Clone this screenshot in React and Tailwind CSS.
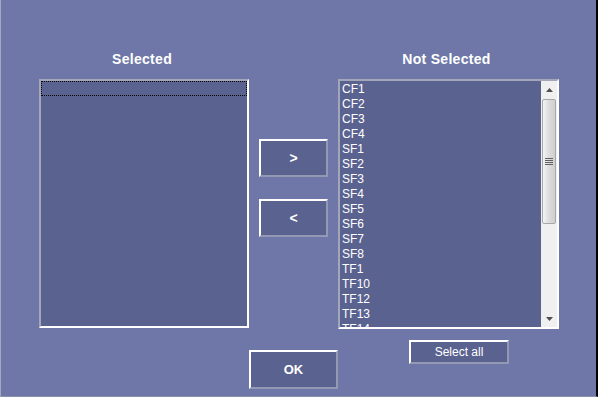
import React from "react";

const items = ["CF1","CF2","CF3","CF4","SF1","SF2","SF3","SF4","SF5","SF6","SF7","SF8","TF1","TF10","TF12","TF13","TF14"];

function RaisedButton({ className, children }) {
  return (
    <div className={"flex items-center justify-center bg-[#5a6290] border-t-2 border-l-2 border-t-white border-l-white border-b-2 border-r-2 border-b-[#9499b3] border-r-[#9499b3] text-white " + className}>
      {children}
    </div>
  );
}

export default function App() {
  return (
    <div
      className="w-[598px] h-[397px] bg-[#6e77a7] border-l border-l-[#a4a8c0] border-r-2 border-r-black border-b border-b-[#8a8fae] flex flex-col pl-[38px] pt-[51px] overflow-hidden"
      style={{ fontFamily: '"Liberation Sans", Arial, sans-serif' }}
    >
      <div className="flex">
        {/* Left column */}
        <div className="w-[210px] flex flex-col">
          <div className="h-[16px] leading-[16px] text-center text-white font-bold text-[14px] tracking-[0.3px] pr-[4px]">Selected</div>
          <div className="mt-[12px] h-[249px] bg-[#5a6290] border-t-2 border-l-2 border-t-[#a3a6b8] border-l-[#a3a6b8] border-b-2 border-r-2 border-b-white border-r-white">
            <div className="h-[15px] border border-dotted border-black"></div>
          </div>
        </div>
        {/* Middle column */}
        <div className="ml-[10px] w-[69px] flex flex-col pt-[88px] gap-[22px]">
          <RaisedButton className="h-[38px] font-bold text-[14px]">&gt;</RaisedButton>
          <RaisedButton className="h-[38px] font-bold text-[14px]">&lt;</RaisedButton>
        </div>
        {/* Right column */}
        <div className="ml-[10px] w-[221px] flex flex-col">
          <div className="h-[16px] leading-[16px] text-center text-white font-bold text-[14px] tracking-[0.3px] pr-[4px]">Not Selected</div>
          <div className="mt-[12px] h-[250px] bg-[#5a6290] border-t-2 border-l-2 border-t-[#a3a6b8] border-l-[#a3a6b8] border-b-2 border-r-2 border-b-white border-r-white flex overflow-hidden">
            <div className="flex-1 overflow-hidden pl-[2px] pt-[1px]">
              {items.map((it) => (
                <div key={it} className="h-[15px] leading-[15px] text-white text-[12px]">{it}</div>
              ))}
            </div>
            <div className="w-[16px] bg-[#f0f0f0] flex flex-col items-center">
              <div className="h-[17px] w-full flex items-center justify-center">
                <svg width="7" height="4" viewBox="0 0 7 4"><path d="M0 4 L3.5 0 L7 4 Z" fill="#505050" /></svg>
              </div>
              <div className="w-[14px] h-[125px] mt-[1px] rounded-[2px] border border-[#a8a8a8] bg-gradient-to-r from-[#f4f4f4] via-[#dcdcdc] to-[#cfcfcf] flex items-center justify-center">
                <svg width="8" height="8" viewBox="0 0 8 8">
                  <path d="M0 0.5 H8 M0 2.5 H8 M0 4.5 H8 M0 6.5 H8" stroke="#606060" strokeWidth="1" />
                </svg>
              </div>
              <div className="flex-1"></div>
              <div className="h-[17px] w-full flex items-center justify-center">
                <svg width="7" height="4" viewBox="0 0 7 4"><path d="M0 0 L3.5 4 L7 0 Z" fill="#505050" /></svg>
              </div>
            </div>
          </div>
        </div>
      </div>
      {/* Bottom row */}
      <div className="flex">
        <div className="ml-[210px] mt-[21px]">
          <RaisedButton className="w-[89px] h-[39px] font-bold text-[13px]">OK</RaisedButton>
        </div>
        <div className="ml-[71px] mt-[11px]">
          <RaisedButton className="w-[100px] h-[24px] text-[12px]">Select all</RaisedButton>
        </div>
      </div>
    </div>
  );
}
